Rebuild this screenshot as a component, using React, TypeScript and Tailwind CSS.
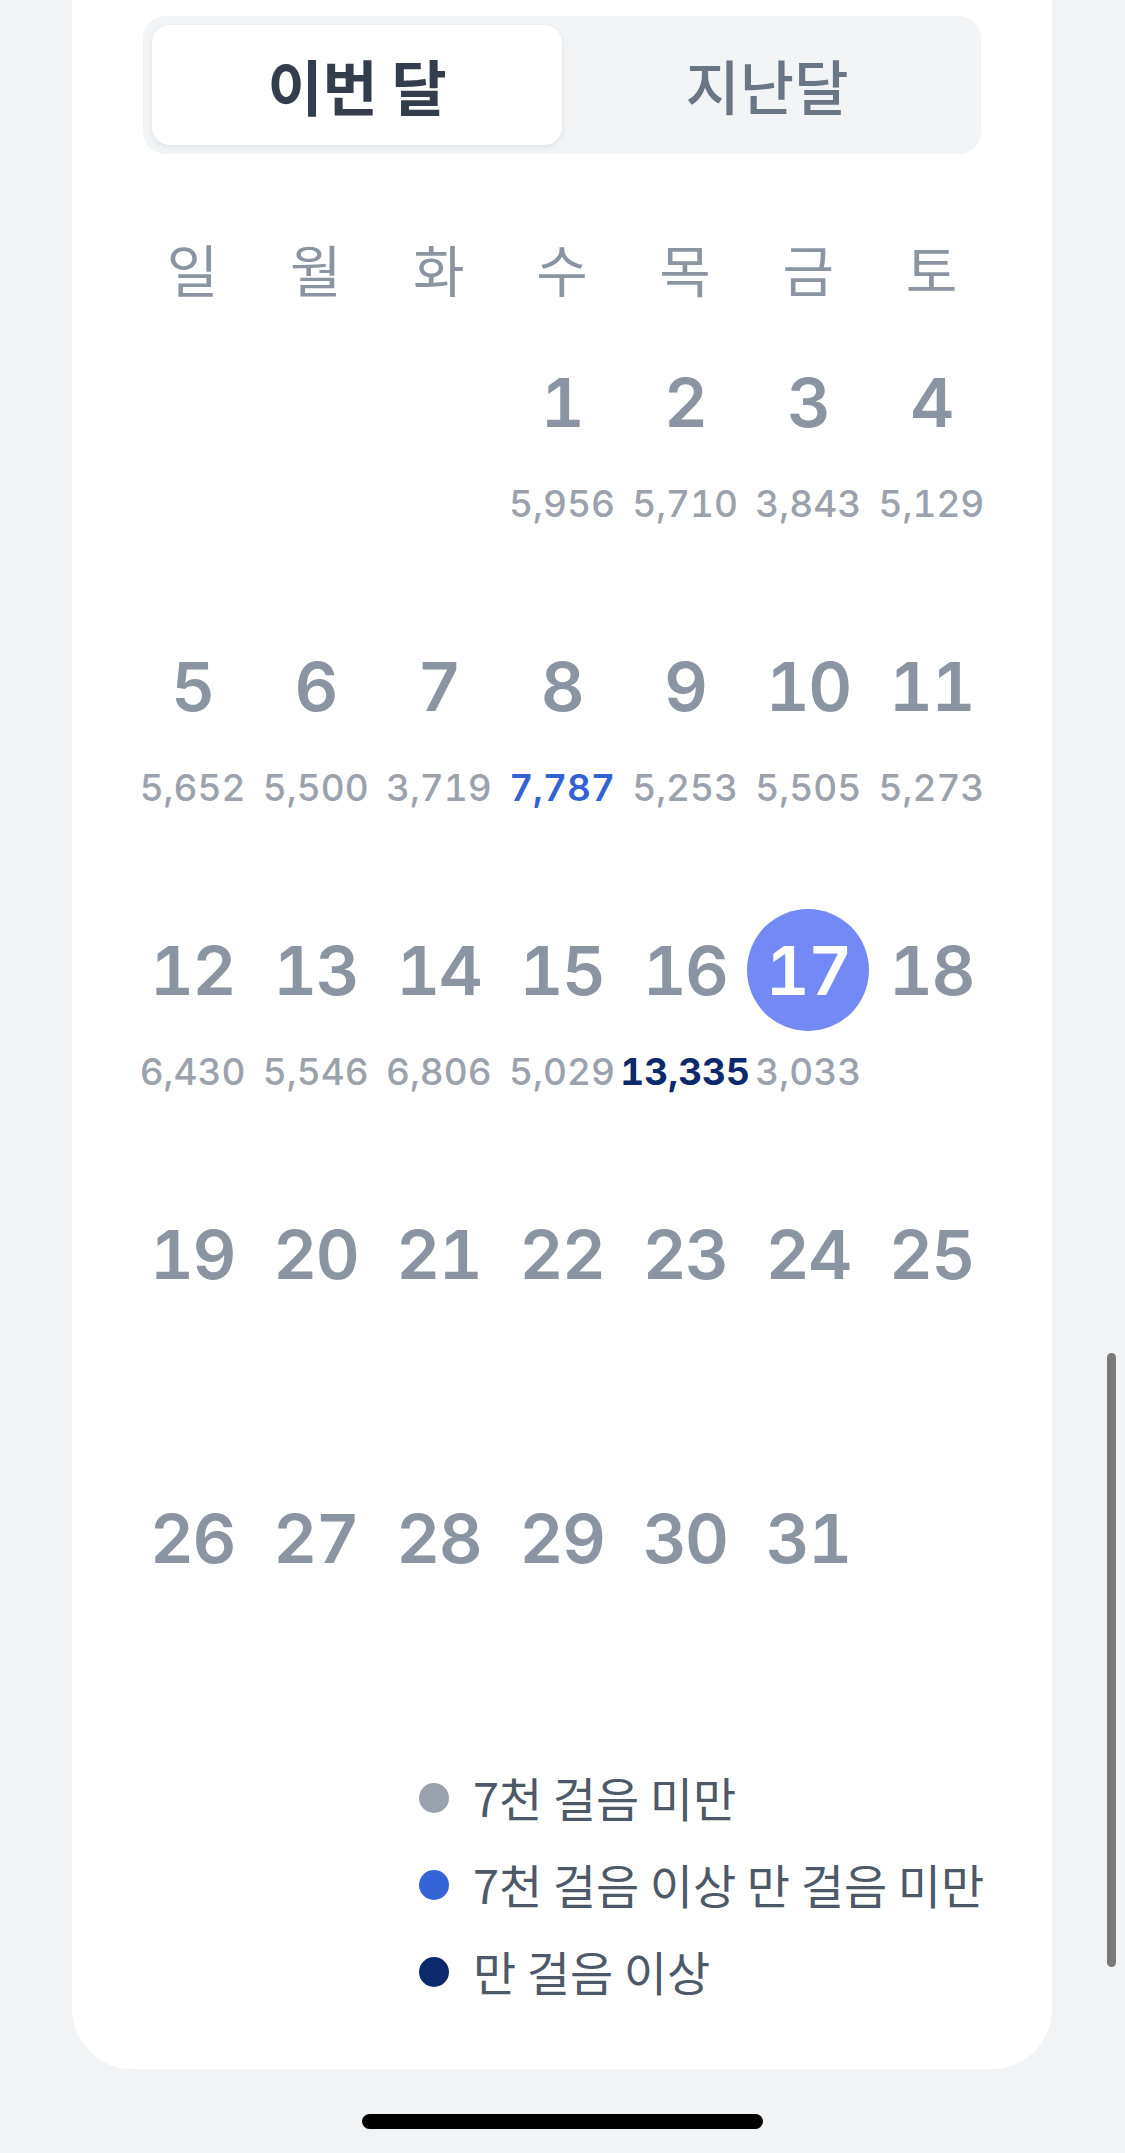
import React from 'react';

type Day = { d: number; steps?: number } | null;

const weeks: Day[][] = [
  [null, null, null, { d: 1, steps: 5956 }, { d: 2, steps: 5710 }, { d: 3, steps: 3843 }, { d: 4, steps: 5129 }],
  [
    { d: 5, steps: 5652 },
    { d: 6, steps: 5500 },
    { d: 7, steps: 3719 },
    { d: 8, steps: 7787 },
    { d: 9, steps: 5253 },
    { d: 10, steps: 5505 },
    { d: 11, steps: 5273 },
  ],
  [
    { d: 12, steps: 6430 },
    { d: 13, steps: 5546 },
    { d: 14, steps: 6806 },
    { d: 15, steps: 5029 },
    { d: 16, steps: 13335 },
    { d: 17, steps: 3033 },
    { d: 18 },
  ],
  [{ d: 19 }, { d: 20 }, { d: 21 }, { d: 22 }, { d: 23 }, { d: 24 }, { d: 25 }],
  [{ d: 26 }, { d: 27 }, { d: 28 }, { d: 29 }, { d: 30 }, { d: 31 }, null],
];

const weekdays = ['일', '월', '화', '수', '목', '금', '토'];
const TODAY = 17;

const korean = "font-['Noto_Sans_CJK_KR',sans-serif]";
const digits = "font-['Inter','Noto_Sans_CJK_KR',sans-serif] tabular-nums";

const stepClass = (n: number) => {
  if (n >= 10000) return 'text-[#0c2a6b] font-bold';
  if (n >= 7000) return 'text-[#3462d3] font-semibold';
  return 'text-[#9ba2ac] font-medium';
};

const legend = [
  { color: 'bg-[#9aa2ad]', label: '7천 걸음 미만' },
  { color: 'bg-[#3464d6]', label: '7천 걸음 이상 만 걸음 미만' },
  { color: 'bg-[#0c2a6b]', label: '만 걸음 이상' },
];

const App: React.FC = () => {
  return (
    <div className="relative w-full h-[2153px] bg-[#f2f3f5] overflow-hidden">
      <div className="ml-[72px] w-[980px] h-[2069px] bg-white rounded-b-[60px] px-[59px] pt-[16px]">
        {/* month toggle */}
        <div className="mx-[12px] h-[138px] p-[9px] rounded-[22px] bg-[#f2f4f6] grid grid-cols-2">
          <div className={`flex items-center justify-center rounded-[18px] bg-white shadow-[0_2px_6px_rgba(0,0,0,0.08)] text-[60px] font-semibold text-[#333d4b] ${korean}`}>
            이번 달
          </div>
          <div className={`flex items-center justify-center text-[59px] font-medium text-[#6b7684] ${korean}`}>
            지난달
          </div>
        </div>

        {/* weekdays */}
        <div className="grid grid-cols-7 mt-[72px] mb-[35px] h-[80px]">
          {weekdays.map((w) => (
            <div key={w} className={`flex items-center justify-center text-[56px] text-[#8b95a1] ${korean}`}>
              {w}
            </div>
          ))}
        </div>

        {/* days */}
        {weeks.map((week, wi) => (
          <div key={wi} className={`grid grid-cols-7 ${wi === weeks.length - 1 ? 'h-[277px]' : 'h-[284px]'}`}>
            {week.map((day, di) => (
              <div key={di} className="flex flex-col items-center">
                {day && (
                  <>
                    <div
                      className={`w-[122px] h-[122px] rounded-full flex items-center justify-center text-[68px] font-semibold tracking-[-1.5px] ${digits} ${
                        day.d === TODAY ? 'bg-[#7389f5] text-white' : 'text-[#8b95a1]'
                      }`}
                    >
                      {day.d}
                    </div>
                    {day.steps !== undefined && (
                      <div className={`mt-[19px] h-[44px] leading-[44px] whitespace-nowrap text-[37px] ${digits} ${stepClass(day.steps)}`}>
                        {day.steps.toLocaleString('en-US')}
                      </div>
                    )}
                  </>
                )}
              </div>
            ))}
          </div>
        ))}

        {/* legend */}
        <div className="pl-[288px] flex flex-col">
          {legend.map((l) => (
            <div key={l.label} className="flex items-center h-[87px] gap-[24px] whitespace-nowrap">
              <span className={`shrink-0 w-[30px] h-[30px] rounded-full ${l.color}`} />
              <span className={`text-[47px] text-[#4e5968] ${korean}`}>{l.label}</span>
            </div>
          ))}
        </div>
      </div>

      {/* home indicator */}
      <div className="mt-[45px] mx-auto w-[401px] h-[15px] rounded-full bg-black" />

      {/* scroll indicator */}
      <div className="absolute right-[9px] top-[1353px] w-[9px] h-[614px] rounded-full bg-[#7a7a7a]" />
    </div>
  );
};

export default App;
